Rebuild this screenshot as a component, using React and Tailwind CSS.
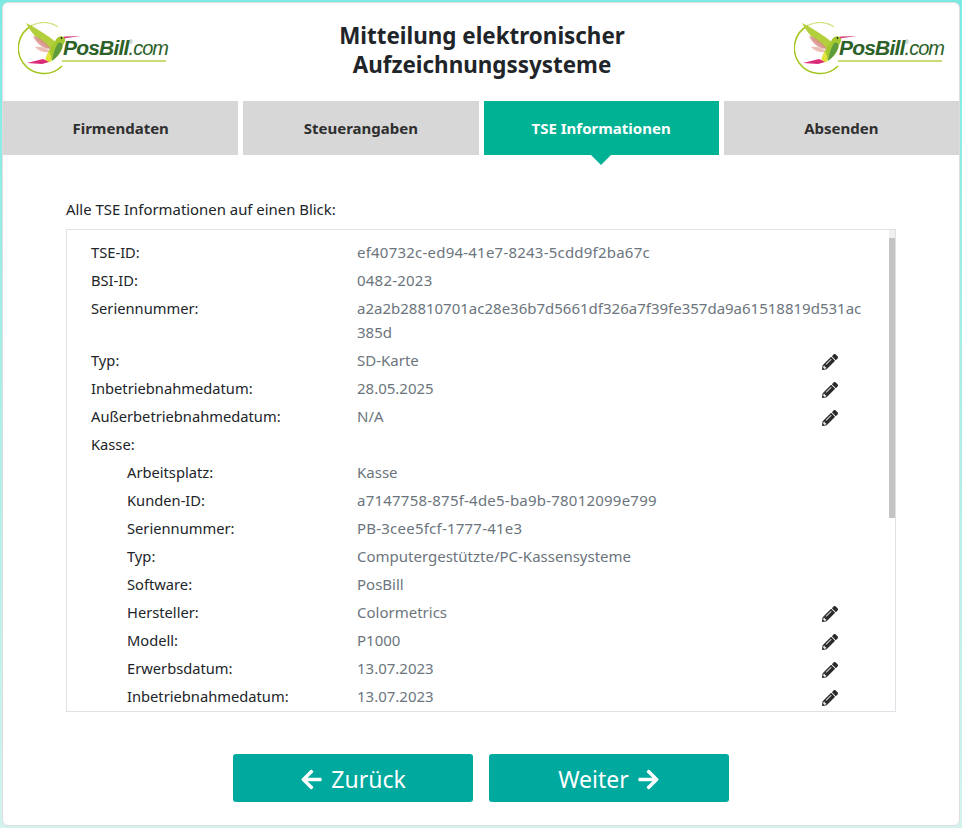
import React from 'react';
import { FaArrowLeft, FaArrowRight, FaPencilAlt } from 'react-icons/fa';

const rows = [
  { label: 'TSE-ID:', value: 'ef40732c-ed94-41e7-8243-5cdd9f2ba67c', wide: true },
  { label: 'BSI-ID:', value: '0482-2023', wide: true },
  { label: 'Seriennummer:', value: 'a2a2b28810701ac28e36b7d5661df326a7f39fe357da9a61518819d531ac385d' },
  { label: 'Typ:', value: 'SD-Karte', edit: true },
  { label: 'Inbetriebnahmedatum:', value: '28.05.2025', edit: true },
  { label: 'Außerbetriebnahmedatum:', value: 'N/A', edit: true },
  { label: 'Kasse:', value: '' },
  { label: 'Arbeitsplatz:', value: 'Kasse', sub: true },
  { label: 'Kunden-ID:', value: 'a7147758-875f-4de5-ba9b-78012099e799', sub: true, wide: true },
  { label: 'Seriennummer:', value: 'PB-3cee5fcf-1777-41e3', sub: true, wide: true },
  { label: 'Typ:', value: 'Computergestützte/PC-Kassensysteme', sub: true },
  { label: 'Software:', value: 'PosBill', sub: true },
  { label: 'Hersteller:', value: 'Colormetrics', sub: true, edit: true },
  { label: 'Modell:', value: 'P1000', sub: true, edit: true },
  { label: 'Erwerbsdatum:', value: '13.07.2023', sub: true, edit: true },
  { label: 'Inbetriebnahmedatum:', value: '13.07.2023', sub: true, edit: true },
];

const tabs = ['Firmendaten', 'Steuerangaben', 'TSE Informationen', 'Absenden'];

const Logo = () => (
  <div className="relative w-[152px] h-[54px]">
    <svg viewBox="0 0 152 54" className="absolute left-0 top-0 w-[152px] h-[54px]">
      <path d="M40 4.7 A25.5 25.5 0 0 0 14 3.5" fill="none" stroke="#d3e07c" strokeWidth="1.2" />
      <path d="M14 3.5 A25.5 25.5 0 1 0 44 44" fill="none" stroke="#a2c61c" strokeWidth="1.5" />
      <path d="M8 1 C18 6 29 13 38 20 L34 28 C25 23 14 13 8 1z" fill="#b4cf3c" />
      <path d="M15 14 C21 15 29 21 33 27 C27 27 20 24 15 14z" fill="#d98f8c" opacity="0.85" />
      <path d="M17 25 C23 24 29 26 33 30 C27 31 22 30 17 25z" fill="#e3aaa0" opacity="0.75" />
      <path d="M37 20 C38 15 43 13 46 15 C48 17 47 20 45 23 C44 31 38 37 30 40 C27 36 31 26 37 20z" fill="#a5c830" />
      <path d="M40 21 C44 20 45 22 44 26 C42 32 38 36 34 39 C35 32 37 26 40 21z" fill="#5f9c3c" />
      <path d="M31 29 C33 33 34 37 33 40 L27 40 C27 36 29 32 31 29z" fill="#e2e23c" />
      <path d="M46 14.5 L63 14 L46 16.5z" fill="#d8457f" />
      <path d="M9 41 L25 37 L31 40 L24 42z" fill="#dc2a78" />
      <circle cx="43.5" cy="16" r="0.9" fill="#222" />
      <rect x="44" y="38" width="104" height="2" fill="#c8dd76" />
    </svg>
    <div className="absolute left-[45px] top-[13px] flex items-baseline italic text-[#2c6128] font-['Liberation_Sans',sans-serif] leading-[26px] whitespace-nowrap">
      <span className="text-[21px] font-bold tracking-[-0.8px]">PosBill</span>
      <span className="text-[20px] font-normal tracking-[-1px]">.com</span>
    </div>
    <span className="absolute left-[111px] top-[17px] text-[5px] leading-[6px] text-[#6f8f5c] font-['Liberation_Sans',sans-serif]">®</span>
  </div>
);

const App = () => {
  return (
    <div className="w-[962px] h-[828px] p-[2px] bg-gradient-to-b from-[#7aeae3] to-[#d2f3ee] font-['Noto_Sans',sans-serif] overflow-hidden">
      <div className="h-[824px] bg-white border border-[#dddddd] rounded-[6px] flex flex-col">
        <div className="h-[98px] flex justify-between pl-[15px] pr-[13px] pt-[19px]">
          <Logo />
          <h1 className="text-[22.4px] leading-[29px] font-bold text-[#212529] text-center mt-[-1px]">
            Mitteilung elektronischer
            <br />
            Aufzeichnungssysteme
          </h1>
          <Logo />
        </div>

        <div className="grid grid-cols-4 gap-[5px]">
          {tabs.map((tab, i) => (
            <div
              key={tab}
              className={`relative h-[54px] flex items-center justify-center text-[15px] font-bold ${
                i === 2 ? 'bg-[#00b294] text-white' : 'bg-[#d7d7d7] text-[#2f2f2f]'
              }`}
            >
              {tab}
              {i === 2 && (
                <div className="absolute left-1/2 top-full -translate-x-1/2 border-x-[10px] border-t-[10px] border-x-transparent border-t-[#00b294]" />
              )}
            </div>
          ))}
        </div>

        <div className="px-[63px] pt-[44px]">
          <p className="text-[14.9px] leading-5 text-[#212529] mb-[10px]">Alle TSE Informationen auf einen Blick:</p>
          <div className="relative h-[483px] border border-[#dee2e6] overflow-hidden pl-6 pt-2">
            {rows.map((row, i) => (
              <div key={i} className="flex py-0.5 text-[15px] leading-6">
                <div className={`w-[266px] shrink-0 text-[14.7px] text-[#212529] ${row.sub ? 'pl-9' : ''}`}>{row.label}</div>
                <div className={`w-[506px] shrink-0 text-[#6c757d] break-all ${row.wide ? 'tracking-[0.22px]' : ''}`}>
                  {row.value}
                </div>
                {row.edit && (
                  <div className="w-4 ml-[-41px] mt-0.5 -mb-0.5 flex items-center h-6 text-[#2b2b2b]">
                    <FaPencilAlt size={16} />
                  </div>
                )}
              </div>
            ))}
            <div className="absolute right-0 top-0 bottom-0 w-[7px] bg-white">
              <div className="h-2 ml-px w-[6px] bg-[#f0f0f0]" />
              <div className="ml-px h-[280px] w-[6px] bg-[#c4c4c4]" />
            </div>
          </div>
        </div>

        <div className="flex justify-center gap-4 mt-[42px]">
          <button className="w-60 h-12 pt-0.5 rounded-[3px] bg-[#00a99d] text-white text-[23px] flex items-center justify-center gap-2">
            <FaArrowLeft size={23} />
            Zurück
          </button>
          <button className="w-60 h-12 pt-0.5 rounded-[3px] bg-[#00a99d] text-white text-[23px] flex items-center justify-center gap-2">
            Weiter
            <FaArrowRight size={23} />
          </button>
        </div>
      </div>
    </div>
  );
};

export default App;
